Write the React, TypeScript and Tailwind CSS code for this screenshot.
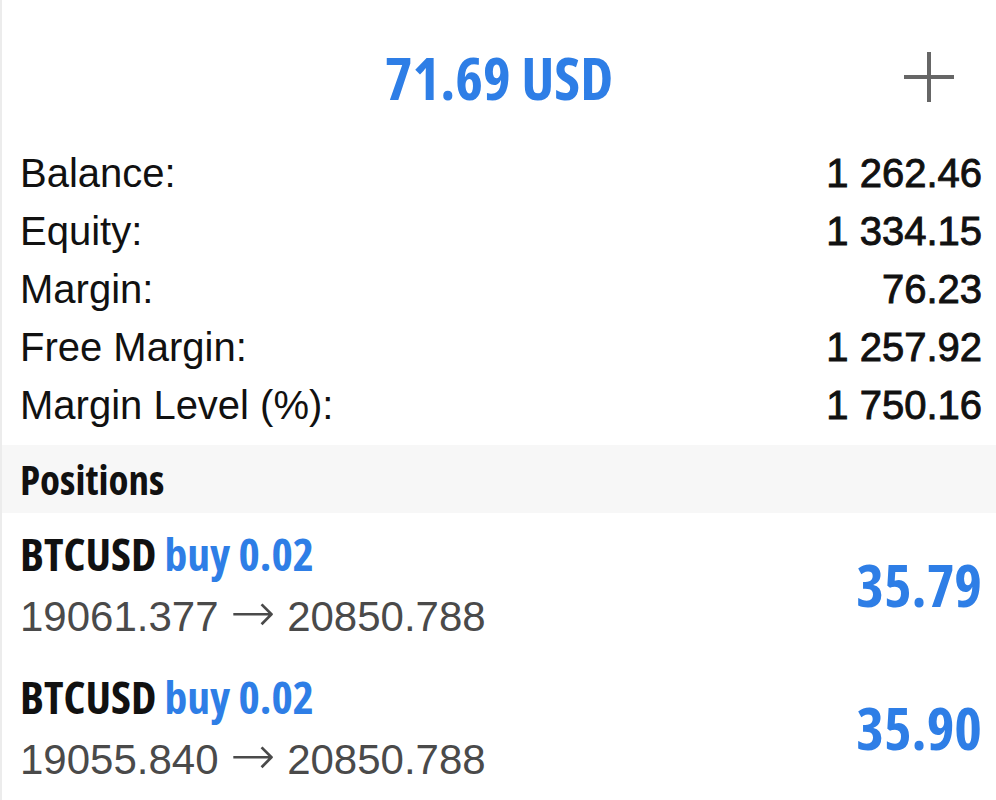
import React from "react";

const cond = "font-['Open_Sans','Noto_Sans',sans-serif] font-bold";
const helv = "font-['Liberation_Sans','Arial',sans-serif]";

const summary = [
    { label: "Balance:", value: "1 262.46" },
    { label: "Equity:", value: "1 334.15" },
    { label: "Margin:", value: "76.23" },
    { label: "Free Margin:", value: "1 257.92" },
    { label: "Margin Level (%):", value: "1 750.16" },
];

const positions = [
    { symbol: "BTCUSD", side: "buy 0.02", open: "19061.377", current: "20850.788", profit: "35.79" },
    { symbol: "BTCUSD", side: "buy 0.02", open: "19055.840", current: "20850.788", profit: "35.90" },
];

const PlusIcon = () => (
    <svg width="50" height="50" viewBox="0 0 50 50" fill="none">
        <line x1="25" y1="0" x2="25" y2="50" stroke="#666666" strokeWidth="4" />
        <line x1="0" y1="25" x2="50" y2="25" stroke="#666666" strokeWidth="4" />
    </svg>
);

const App = () => {
    return (
        <div className="w-[996px] h-[800px] bg-white overflow-hidden border-l-2 border-[#ececec]">
            {/* header */}
            <div className="grid grid-cols-[1fr_auto_1fr] items-center h-[144px] pt-[10px]">
                <div />
                <h1 className={`${cond} [font-stretch:86%] text-[59px] leading-none text-[#2e7ee6]`}>71.69 USD</h1>
                <div className="flex justify-end pr-[42px]">
                    <PlusIcon />
                </div>
            </div>

            {/* account summary */}
            <div className={`${helv} pl-[18px] pr-[14px]`}>
                {summary.map((row) => (
                    <div key={row.label} className="flex items-center justify-between h-[58px] text-[40px] text-[#111]">
                        <span>{row.label}</span>
                        <span className="[-webkit-text-stroke:0.9px_#111]">{row.value}</span>
                    </div>
                ))}
            </div>

            <div className="mt-[11px] h-[68px] bg-[#f7f7f7] flex items-center pl-[18px]">
                <h2 className={`${cond} [font-stretch:75%] text-[41px] leading-none text-[#111]`}>Positions</h2>
            </div>

            {/* positions */}
            {positions.map((p, i) => (
                <div key={i} className="flex items-center justify-between h-[143px] pl-[18px] pr-[14px]">
                    <div className="flex flex-col">
                        <div className={`${cond} [font-stretch:75%] text-[45.5px] leading-[60px]`}>
                            <span className="text-[#111]">{p.symbol}</span>{" "}
                            <span className="text-[#2e7ee6]">{p.side}</span>
                        </div>
                        <div className={`${helv} text-[42px] leading-[60px] text-[#4a4a4a]`}>
                            {p.open} <span className="font-['DejaVu_Sans',sans-serif] text-[54px] font-extralight">→</span> {p.current}
                        </div>
                    </div>
                    <span className={`${cond} [font-stretch:80%] text-[59px] leading-none text-[#2e7ee6]`}>{p.profit}</span>
                </div>
            ))}
        </div>
    );
};

export default App;
